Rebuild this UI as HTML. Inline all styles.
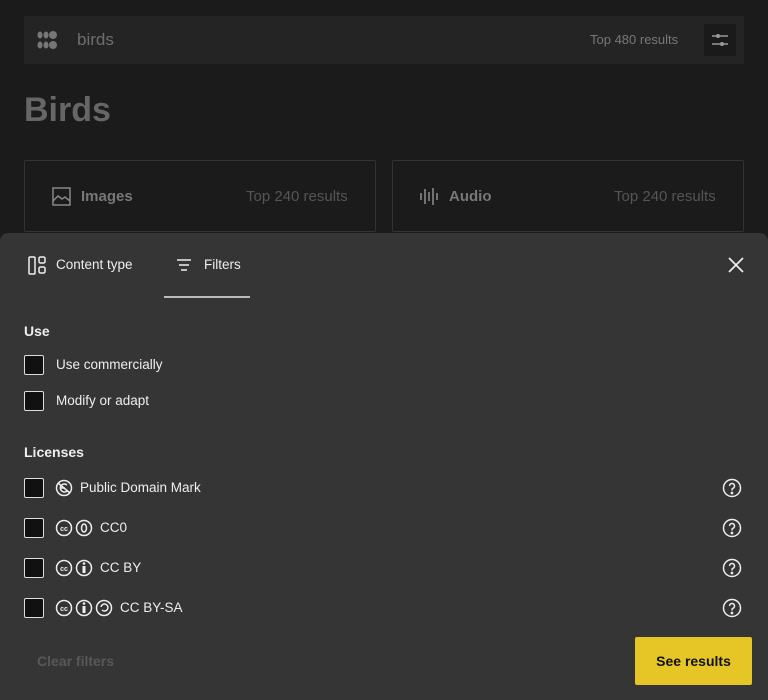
<!DOCTYPE html>
<html><head><style>
*{box-sizing:border-box;margin:0;padding:0}
body{width:768px;height:700px;background:#1b1b1b;font-family:"Liberation Sans",sans-serif;position:relative;overflow:hidden;color:#fff}
.abs{position:absolute}
.search{left:24px;top:16px;width:720px;height:48px;background:#242424}
.card{top:160px;width:352px;height:72px;border:1px solid #333;border-radius:2px}
.panel{left:0;top:233px;width:768px;height:467px;background:#353535;border-radius:8px 8px 0 0}
.cb{width:20px;height:20px;border:1.5px solid #ddd;background:#111;border-radius:2px;left:24px}
.t{font-size:13.5px;color:#eee;letter-spacing:0}
.h{font-size:14px;font-weight:bold;color:#eee}
</style></head><body>
<div class="abs search">
 <svg class="abs" style="left:13px;top:14px" width="22" height="20" viewBox="0 0 22 20" fill="#777"><ellipse cx="3" cy="5" rx="2.5" ry="3.5"/><ellipse cx="9" cy="5" rx="2.5" ry="3.5"/><circle cx="16" cy="5" r="4"/><ellipse cx="3" cy="15" rx="2.5" ry="3.5"/><ellipse cx="9" cy="15" rx="2.5" ry="3.5"/><circle cx="16" cy="15" r="4"/></svg>
 <div class="abs" style="left:53px;top:14px;font-size:17px;color:#6e6e6e">birds</div>
 <div class="abs" style="left:566px;top:16px;font-size:13px;color:#777">Top 480 results</div>
 <div class="abs" style="left:680px;top:8px;width:32px;height:32px;background:#1a1a1a"><svg width="32" height="32"><g stroke="#999" stroke-width="1.5"><line x1="8" y1="12" x2="24" y2="12"/><line x1="8" y1="20" x2="24" y2="20"/></g><circle cx="14" cy="12" r="2" fill="#999"/><circle cx="18" cy="20" r="2" fill="#999"/></svg></div>
</div>
<div class="abs" style="left:24px;top:91px;font-size:34px;font-weight:bold;color:#666">Birds</div>
<div class="abs card" style="left:24px">
 <svg class="abs" style="left:27px;top:26px" width="19" height="19" viewBox="0 0 19 19" fill="none" stroke="#888" stroke-width="1.5"><rect x="1" y="1" width="17" height="17"/><path d="M1 14l5-5 4 3 3-2 5 4"/></svg>
 <div class="abs" style="left:56px;top:27px;font-size:15px;font-weight:bold;color:#777">Images</div>
 <div class="abs" style="left:221px;top:27px;font-size:15px;color:#555">Top 240 results</div>
</div>
<div class="abs card" style="left:392px">
 <svg class="abs" style="left:27px;top:26px" width="19" height="19" stroke="#888" stroke-width="1.6"><path d="M1 6v7M5 2v15M9 5v9M13 1v17M17 6v7"/></svg>
 <div class="abs" style="left:56px;top:27px;font-size:15px;font-weight:bold;color:#777">Audio</div>
 <div class="abs" style="left:221px;top:27px;font-size:15px;color:#555">Top 240 results</div>
</div>
<div class="abs panel">
 <svg class="abs" style="left:28px;top:23px" width="18" height="19" fill="none" stroke="#eee" stroke-width="1.5"><rect x="1" y="1" width="6" height="17" rx="1"/><rect x="11" y="1" width="6" height="6" rx="1.5"/><rect x="11" y="11" width="6" height="6" rx="1.5"/></svg>
 <div class="abs t" style="left:56px;top:24px">Content type</div>
 <svg class="abs" style="left:176px;top:25px" width="16" height="14" stroke="#eee" stroke-width="1.5"><path d="M1 2h14M3 7h10M5 12h6"/></svg>
 <div class="abs t" style="left:204px;top:24px">Filters</div>
 <div class="abs" style="left:164px;top:63px;width:86px;height:2px;background:#bbb"></div>
 <svg class="abs" style="left:727px;top:23px" width="18" height="18" stroke="#eee" stroke-width="1.7"><path d="M2 2l14 14M16 2L2 16"/></svg>
 <div class="abs h" style="left:24px;top:90px">Use</div>
 <div class="abs cb" style="top:122px"></div><div class="abs t" style="left:56px;top:124px">Use commercially</div>
 <div class="abs cb" style="top:158px"></div><div class="abs t" style="left:56px;top:160px">Modify or adapt</div>
 <div class="abs h" style="left:24px;top:211px">Licenses</div>
 <div class="abs cb" style="top:245px"></div>
 <svg class="abs" style="left:55px;top:246px" width="18" height="18" fill="none" stroke="#eee" stroke-width="1.5"><circle cx="9" cy="9" r="7.5"/><path d="M12 6a4 4 0 1 0 0 6M5 9h5M3 4l12 10"/></svg>
 <div class="abs t" style="left:80px;top:247px">Public Domain Mark</div>
 <div class="abs cb" style="top:285px"></div>
 <svg class="abs" style="left:55px;top:286px" width="40" height="18" fill="none" stroke="#eee" stroke-width="1.5"><circle cx="9" cy="9" r="7.5"/><text x="9" y="12" font-size="7" fill="#eee" stroke="none" text-anchor="middle" font-family="Liberation Sans" font-weight="bold">cc</text><circle cx="29" cy="9" r="7.5"/><ellipse cx="29" cy="9" rx="2.5" ry="4"/></svg>
 <div class="abs t" style="left:100px;top:287px">CC0</div>
 <div class="abs cb" style="top:325px"></div>
 <svg class="abs" style="left:55px;top:326px" width="40" height="18" fill="none" stroke="#eee" stroke-width="1.5"><circle cx="9" cy="9" r="7.5"/><text x="9" y="12" font-size="7" fill="#eee" stroke="none" text-anchor="middle" font-family="Liberation Sans" font-weight="bold">cc</text><circle cx="29" cy="9" r="7.5"/><circle cx="29" cy="4.5" r="1.3" fill="#eee" stroke="none"/><rect x="27.5" y="7" width="3" height="7" fill="#eee" stroke="none"/></svg>
 <div class="abs t" style="left:100px;top:327px">CC BY</div>
 <div class="abs cb" style="top:365px"></div>
 <svg class="abs" style="left:55px;top:366px" width="60" height="18" fill="none" stroke="#eee" stroke-width="1.5"><circle cx="9" cy="9" r="7.5"/><text x="9" y="12" font-size="7" fill="#eee" stroke="none" text-anchor="middle" font-family="Liberation Sans" font-weight="bold">cc</text><circle cx="29" cy="9" r="7.5"/><circle cx="29" cy="4.5" r="1.3" fill="#eee" stroke="none"/><rect x="27.5" y="7" width="3" height="7" fill="#eee" stroke="none"/><circle cx="49" cy="9" r="7.5"/><path d="M46 8a3.5 3.5 0 1 1 1 3"/></svg>
 <div class="abs t" style="left:120px;top:367px">CC BY-SA</div>
 <svg class="abs" style="left:722px;top:245px" width="20" height="140" fill="none" stroke="#eee" stroke-width="1.5">
  <g id="q"><circle cx="10" cy="10" r="8.5"/><path d="M7.5 8a2.5 2.5 0 1 1 3.5 2.3c-.7.3-1 .8-1 1.5v.7"/><circle cx="10" cy="15" r=".6" fill="#eee"/></g>
  <use href="#q" y="40"/><use href="#q" y="80"/><use href="#q" y="120"/>
 </svg>
 <div class="abs" style="left:37px;top:420px;font-size:14px;font-weight:bold;color:#585858">Clear filters</div>
 <div class="abs" style="left:635px;top:404px;width:117px;height:48px;background:#e6c526;border-radius:2px;color:#111;font-size:14px;font-weight:bold;text-align:center;line-height:48px">See results</div>
</div>
</body></html>
